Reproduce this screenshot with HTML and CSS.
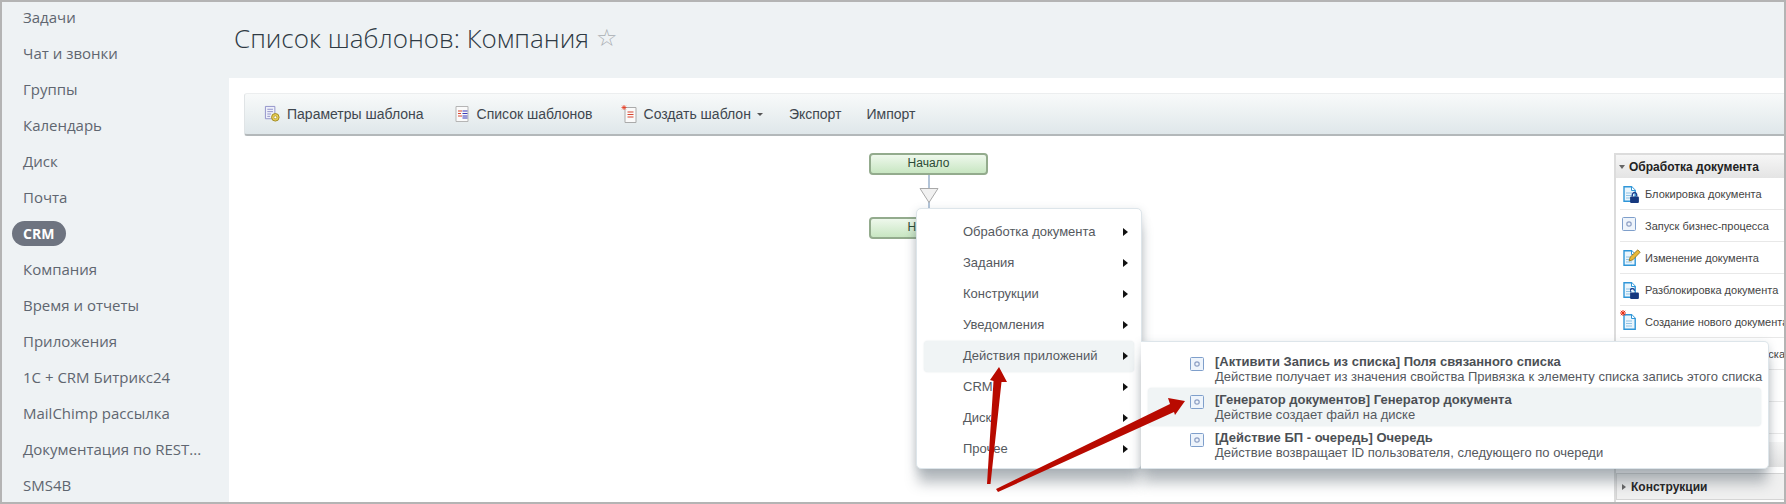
FILE: index.html
```html
<!DOCTYPE html>
<html lang="ru">
<head>
<meta charset="utf-8">
<title>Список шаблонов: Компания</title>
<link rel="stylesheet" href="styles.css">
</head>
<body>
<svg class="defs" xmlns="http://www.w3.org/2000/svg">
  <symbol id="doc" viewBox="0 0 13 16"><path d="M1 .8h7.500L12.200 4.500V15.200H1z" fill="#eaf5fc" stroke="#2f96d8" stroke-width="1.400"/><path d="M8.500 .8v3.700h3.700" fill="#fff" stroke="#2f96d8"/><path d="M3 7h6M3 9.500h6M3 12h6" stroke="#8fc3e6"/></symbol>
  <symbol id="proc" viewBox="0 0 14 14"><rect x=".5" y=".5" width="13" height="13" rx="1" fill="#eef4fb" stroke="#7f9fcb"/><circle cx="7" cy="7" r="2.2" fill="#eef4fb" stroke="#8d9fc4" stroke-width="1.2"/></symbol>
</svg>
<div class="frame">
  <nav class="sidebar">
    <a class="nav-item">Задачи</a>
    <a class="nav-item">Чат и звонки</a>
    <a class="nav-item">Группы</a>
    <a class="nav-item">Календарь</a>
    <a class="nav-item">Диск</a>
    <a class="nav-item">Почта</a>
    <a class="nav-item nav-active"><span class="pill">CRM</span></a>
    <a class="nav-item">Компания</a>
    <a class="nav-item">Время и отчеты</a>
    <a class="nav-item">Приложения</a>
    <a class="nav-item">1С + CRM Битрикс24</a>
    <a class="nav-item">MailChimp рассылка</a>
    <a class="nav-item">Документация по REST...</a>
    <a class="nav-item">SMS4B</a>
  </nav>
  <main class="main">
    <header class="page-head">
      <h1 class="page-title">Список шаблонов: Компания</h1>
      <span class="star">☆</span>
    </header>
    <section class="content">
      <div class="toolbar">
        <a class="tool tool-params">
          <svg class="tool-icon" viewBox="0 0 18 18"><path d="M1.500 1h10v13h-10z" fill="#eef0fa" stroke="#8f90c8"/><path d="M3.500 4h6M3.500 6.500h6M3.500 9h4M3.500 11.500h3" stroke="#8f90c8"/><circle cx="12" cy="12.500" r="4" fill="#e6cc55" stroke="#a08a20"/><circle cx="12" cy="12.500" r="1.500" fill="#fff" stroke="#a08a20" stroke-width=".7"/></svg>
          Параметры шаблона
        </a>
        <a class="tool tool-list">
          <svg class="tool-icon" viewBox="0 0 16 18"><path d="M1.500 1.500h12v15h-12z" fill="#fafafa" stroke="#b5b5b5"/><path d="M3.500 6h4M3.500 8.500h3M3.500 11h4" stroke="#d8452f" stroke-width="1.200"/><path d="M8 6h5M8 8.500h5M8 11h5M8 13h5" stroke="#3a38b8" stroke-width="1.200"/></svg>
          Список шаблонов
        </a>
        <a class="tool tool-create">
          <svg class="tool-icon" viewBox="0 0 16 18"><path d="M3.500 2.500h11v15h-11z" fill="#fafafa" stroke="#aaa"/><path d="M6 7h6M6 9.500h6M6 12h6" stroke="#d8452f" stroke-width="1.100"/><path d="M2.500 0v5M0 2.500h5M.7.7l3.600 3.600M4.300.7L.7 4.300" stroke="#e83a20" stroke-width=".8"/></svg>
          Создать шаблон<i class="caret"></i>
        </a>
        <a class="tool tool-export">Экспорт</a>
        <a class="tool tool-import">Импорт</a>
      </div>
      <div class="workspace">
        <div class="diagram">
          <div class="node node-start">Начало</div>
          <div class="connector"></div>
          <svg class="drop" viewBox="0 0 20 15"><polygon points="1,.5 19,.5 10,14.500" fill="#f1f1f1" stroke="#a9a9a9"/></svg>
          <div class="node node-second">Начало</div>
        </div>
        <aside class="palette">
          <div class="group-head"><i class="tri-down"></i>Обработка документа</div>
          <ul class="group-list">
            <li class="group-row"><span class="row-icon"><svg class="doc-svg" viewBox="0 0 13 16"><use href="#doc"/></svg><svg class="lock" viewBox="0 0 8 10"><path d="M2 4V2.500a2 2 0 0 1 4 0V4" fill="none" stroke="#1f3f8f" stroke-width="1.200"/><rect y="4" width="8" height="6" rx="1" fill="#16387f"/></svg></span>Блокировка документа</li>
            <li class="group-row"><span class="row-icon"><svg class="proc-svg" viewBox="0 0 14 14"><use href="#proc"/></svg></span>Запуск бизнес-процесса</li>
            <li class="group-row"><span class="row-icon"><svg class="doc-svg" viewBox="0 0 13 16"><use href="#doc"/></svg><svg class="pencil" viewBox="0 0 12 12"><path d="M1 11l1-3.500L9 .8l2.200 2.200L4.500 10z" fill="#e8b93a" stroke="#8a6a10" stroke-width=".7"/></svg></span>Изменение документа</li>
            <li class="group-row"><span class="row-icon"><svg class="doc-svg" viewBox="0 0 13 16"><use href="#doc"/></svg><svg class="lock" viewBox="0 0 8 10"><path d="M0 4V2.500a2 2 0 0 1 4 0" fill="none" stroke="#1f3f8f" stroke-width="1.200"/><rect y="4" width="8" height="6" rx="1" fill="#16387f"/></svg></span>Разблокировка документа</li>
            <li class="group-row"><span class="row-icon"><svg class="doc-svg" viewBox="0 0 13 16"><use href="#doc"/></svg><svg class="spark" viewBox="0 0 6 6"><path d="M3 0v6M0 3h6M.8.800l4.400 4.400M5.200.800L.8 5.200" stroke="#e82a10"/></svg></span>Создание нового документа</li>
            <li class="group-row">Чтение элемента из списка</li>
            <li class="group-row"></li>
            <li class="group-row"></li>
          </ul>
          <div class="group-head group-closed"></div>
          <div class="group-head group-last"><i class="tri-right"></i>Конструкции</div>
        </aside>
      </div>
    </section>
  </main>

  <div class="menu">
    <div class="menu-item">Обработка документа</div>
    <div class="menu-item">Задания</div>
    <div class="menu-item">Конструкции</div>
    <div class="menu-item">Уведомления</div>
    <div class="menu-item menu-current">Действия приложений</div>
    <div class="menu-item">CRM</div>
    <div class="menu-item">Диск</div>
    <div class="menu-item">Прочее</div>
  </div>
  <div class="submenu">
    <div class="sub-item">
      <svg class="sub-icon" viewBox="0 0 14 14"><use href="#proc"/></svg>
      <div><b class="sub-title">[Активити Запись из списка] Поля связанного списка</b><span class="sub-desc">Действие получает из значения свойства Привязка к элементу списка запись этого списка</span></div>
    </div>
    <div class="sub-item sub-current">
      <svg class="sub-icon" viewBox="0 0 14 14"><use href="#proc"/></svg>
      <div><b class="sub-title">[Генератор документов] Генератор документа</b><span class="sub-desc">Действие создает файл на диске</span></div>
    </div>
    <div class="sub-item">
      <svg class="sub-icon" viewBox="0 0 14 14"><use href="#proc"/></svg>
      <div><b class="sub-title">[Действие БП - очередь] Очередь</b><span class="sub-desc">Действие возвращает ID пользователя, следующего по очереди</span></div>
    </div>
  </div>
  <svg class="arrows" viewBox="0 0 1786 504">
    <polygon points="987,484 990.500,484 1001.500,382 1007,382 999,367 990,380 993.500,381" fill="#b80a00"/>
    <polygon points="996,489 998,492 1174,412 1175,415 1185,401 1168,398 1170,404" fill="#b80a00"/>
  </svg>
</div>
</body>
</html>
```
FILE: styles.css
```css
* { box-sizing: border-box; }
html, body { margin: 0; padding: 0; background: #fff; }
.defs { display: none; }

.frame {
  position: relative;
  display: flex;
  width: 1786px;
  height: 504px;
  overflow: hidden;
  border: 2px solid #b4b4b4;
  background: #eef2f4;
}

.sidebar {
  flex: 0 0 227px;
  margin-top: -3px;
  background: #eef2f4;
  font-family: "Open Sans", sans-serif;
  font-size: 15px;
  color: #5f6670;
}
.nav-item {
  display: flex;
  align-items: center;
  height: 36px;
  padding-left: 21px;
  white-space: nowrap;
}
.nav-active { padding-left: 10px; }
.pill {
  display: block;
  padding: 0 12px 0 11px;
  height: 25px;
  line-height: 25px;
  border-radius: 13px;
  background: #6e7480;
  color: #fff;
  font-weight: 700;
  font-size: 14px;
}

.main { flex: 1; display: flex; flex-direction: column; min-width: 0; }
.page-head {
  flex: 0 0 76px;
  display: flex;
  align-items: center;
  gap: 7px;
  padding: 0 0 4px 5px;
}
.page-title {
  margin: 0;
  font-family: "Open Sans", sans-serif;
  font-weight: 300;
  font-size: 26px;
  color: #2f3a44;
}
.star { font-family: "DejaVu Sans", sans-serif; font-size: 24px; line-height: 1; color: #a9aeb2; }

.content { flex: 1; display: flex; flex-direction: column; background: #fff; padding-top: 15px; min-height: 0; }
.toolbar {
  flex: 0 0 43px;
  display: flex;
  align-items: center;
  margin-left: 15px;
  padding-left: 19px;
  font-family: "Liberation Sans", sans-serif;
  font-size: 14px;
  color: #3f474f;
  background: linear-gradient(#f8fafa, #dfe7ea);
  border-top: 1px solid #eceeef;
  border-left: 1px solid #e0e4e6;
  border-bottom: 2px solid #b3b8ba;
  border-radius: 3px 0 0 3px;
}
.tool { display: flex; align-items: center; white-space: nowrap; }
.tool-icon { width: 17px; height: 18px; margin-right: 6px; }
.tool-list { margin-left: 30px; }
.tool-create { margin-left: 28px; }
.tool-export { margin-left: 26px; }
.tool-import { margin-left: 25px; }
.caret {
  margin-left: 6px;
  border-style: solid;
  border-width: 3px 3px 0;
  border-color: #555 transparent transparent;
}

.workspace { flex: 1; display: flex; min-height: 0; }
.diagram { position: relative; flex: 1; min-width: 0; font-family: "Liberation Sans", sans-serif; }
.node {
  position: absolute;
  left: 640px;
  width: 119px;
  height: 22px;
  border: 2px solid #93ab8d;
  border-radius: 4px;
  background: linear-gradient(#eef8ec, #c8e6c2);
  font-size: 12px;
  line-height: 16px;
  text-align: center;
  color: #2c4a35;
}
.node-start { top: 17px; }
.node-second { top: 81px; }
.connector { position: absolute; left: 699px; top: 39px; width: 2px; height: 42px; background: #b3c4d8; }
.drop { position: absolute; left: 690px; top: 52px; width: 20px; height: 15px; }

.palette {
  flex: 0 0 170px;
  min-width: 0;
  overflow: hidden;
  margin-top: 17px;
  border-left: 2px solid #dcdcdc;
  border-top: 2px solid #dcdcdc;
  font-family: "Liberation Sans", sans-serif;
  color: #444;
}
.group-head {
  display: flex;
  align-items: center;
  height: 23px;
  padding-left: 3px;
  font-size: 12px;
  font-weight: 700;
  color: #222;
  background: linear-gradient(#f6f6f6, #e4e4e4);
}
.tri-down {
  margin-right: 4px;
  border-style: solid;
  border-width: 4px 3.500px 0;
  border-color: #666 transparent transparent;
}
.tri-right {
  margin-right: 5px;
  margin-left: 2px;
  border-style: solid;
  border-width: 3.500px 0 3.500px 4px;
  border-color: transparent transparent transparent #666;
}
.group-list { margin: 0; padding: 0 0 0 4px; list-style: none; }
.group-row {
  display: flex;
  align-items: center;
  height: 32px;
  padding-left: 25px;
  font-size: 11px;
  white-space: nowrap;
  overflow: hidden;
  border-bottom: 1px solid #e8e8e8;
}
.row-icon { position: relative; width: 17px; height: 18px; margin-left: -23px; margin-right: 6px; flex: none; }
.row-icon svg { display: block; }
.doc-svg { width: 13px; height: 16px; margin-left: 1px; margin-top: 1px; }
.proc-svg { width: 14px; height: 14px; }
.row-icon .lock { position: absolute; right: 0; bottom: 0; width: 9px; height: 11px; }
.row-icon .pencil { position: absolute; right: -2px; top: 0; width: 13px; height: 13px; }
.row-icon .spark { position: absolute; left: -2px; top: -3px; width: 6px; height: 6px; }
.group-closed { margin-top: 8px; height: 25px; }
.group-last { margin-top: 6px; height: 27px; border: 1px solid #d5d5d5; border-right: 0; padding-left: 3px; background: #f0f0f0; }

.menu, .submenu {
  position: absolute;
  background: #fff;
  border: 1px solid #dde5ea;
  border-radius: 5px;
  box-shadow: 0 16px 13px -2px rgba(70, 85, 95, .38), 0 2px 8px rgba(90, 110, 125, .22);
  font-family: "Liberation Sans", sans-serif;
  color: #55595e;
}
.menu { left: 914px; top: 206px; width: 226px; height: 261px; padding: 8px 7px; font-size: 13px; }
.menu-item {
  position: relative;
  height: 31px;
  line-height: 30px;
  padding-left: 39px;
  border-radius: 4px;
}
.menu-item::after {
  content: "";
  position: absolute;
  right: 6px;
  top: 11px;
  border-style: solid;
  border-width: 4px 0 4px 5px;
  border-color: transparent transparent transparent #111;
}
.menu-current { background: #f0f4f5; box-shadow: 0 0 2px #dfe6e8; }
.submenu { left: 1139px; top: 339px; width: 628px; height: 128px; padding: 8px 7px; font-size: 13px; border-left: 0; border-radius: 0 5px 5px 0; }
.sub-item {
  display: flex;
  align-items: center;
  height: 38px;
  padding-left: 42px;
  border-radius: 4px;
  line-height: 15px;
  white-space: nowrap;
}
.sub-current { background: #f0f4f5; box-shadow: 0 0 2px #dfe6e8; }
.sub-icon { width: 14px; height: 14px; margin-right: 11px; flex: none; align-self: flex-start; margin-top: 7px; }
.sub-title { display: block; color: #4b4f54; }
.sub-desc { display: block; }

.arrows { position: absolute; left: -2px; top: -2px; width: 1786px; height: 504px; }
```
